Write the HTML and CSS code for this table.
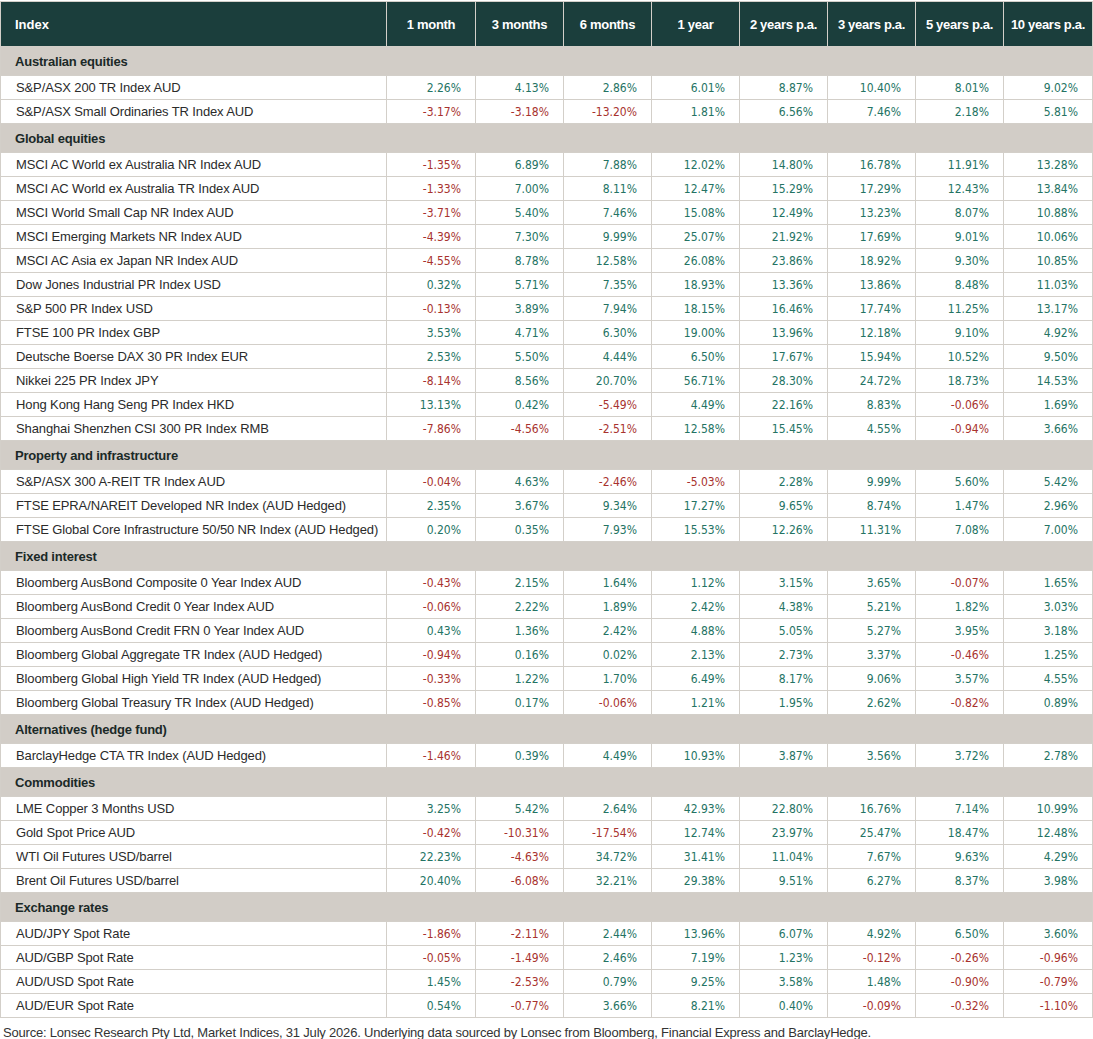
FILE: index.html
```html
<!DOCTYPE html>
<html lang="en">
<head>
<meta charset="utf-8">
<title>Market indices</title>
<link rel="stylesheet" href="styles.css">
</head>
<body>
<div class="page">
<table class="perf">
  <colgroup>
    <col class="c-name"><col class="c-n1"><col class="c-n"><col class="c-n"><col class="c-n"><col class="c-n"><col class="c-n"><col class="c-n"><col class="c-n1">
  </colgroup>
  <thead>
    <tr class="head">
      <th class="name">Index</th><th>1 month</th><th>3 months</th><th>6 months</th><th>1 year</th><th>2 years p.a.</th><th>3 years p.a.</th><th>5 years p.a.</th><th>10 years p.a.</th>
    </tr>
  </thead>
  <tbody>
    <tr class="sec"><td colspan="9">Australian equities</td></tr>
    <tr><td class="name">S&amp;P/ASX 200 TR Index AUD</td><td class="p">2.26%</td><td class="p">4.13%</td><td class="p">2.86%</td><td class="p">6.01%</td><td class="p">8.87%</td><td class="p">10.40%</td><td class="p">8.01%</td><td class="p">9.02%</td></tr>
    <tr><td class="name">S&amp;P/ASX Small Ordinaries TR Index AUD</td><td class="n">-3.17%</td><td class="n">-3.18%</td><td class="n">-13.20%</td><td class="p">1.81%</td><td class="p">6.56%</td><td class="p">7.46%</td><td class="p">2.18%</td><td class="p">5.81%</td></tr>
    <tr class="sec"><td colspan="9">Global equities</td></tr>
    <tr><td class="name">MSCI AC World ex Australia NR Index AUD</td><td class="n">-1.35%</td><td class="p">6.89%</td><td class="p">7.88%</td><td class="p">12.02%</td><td class="p">14.80%</td><td class="p">16.78%</td><td class="p">11.91%</td><td class="p">13.28%</td></tr>
    <tr><td class="name">MSCI AC World ex Australia TR Index AUD</td><td class="n">-1.33%</td><td class="p">7.00%</td><td class="p">8.11%</td><td class="p">12.47%</td><td class="p">15.29%</td><td class="p">17.29%</td><td class="p">12.43%</td><td class="p">13.84%</td></tr>
    <tr><td class="name">MSCI World Small Cap NR Index AUD</td><td class="n">-3.71%</td><td class="p">5.40%</td><td class="p">7.46%</td><td class="p">15.08%</td><td class="p">12.49%</td><td class="p">13.23%</td><td class="p">8.07%</td><td class="p">10.88%</td></tr>
    <tr><td class="name">MSCI Emerging Markets NR Index AUD</td><td class="n">-4.39%</td><td class="p">7.30%</td><td class="p">9.99%</td><td class="p">25.07%</td><td class="p">21.92%</td><td class="p">17.69%</td><td class="p">9.01%</td><td class="p">10.06%</td></tr>
    <tr><td class="name">MSCI AC Asia ex Japan NR Index AUD</td><td class="n">-4.55%</td><td class="p">8.78%</td><td class="p">12.58%</td><td class="p">26.08%</td><td class="p">23.86%</td><td class="p">18.92%</td><td class="p">9.30%</td><td class="p">10.85%</td></tr>
    <tr><td class="name">Dow Jones Industrial PR Index USD</td><td class="p">0.32%</td><td class="p">5.71%</td><td class="p">7.35%</td><td class="p">18.93%</td><td class="p">13.36%</td><td class="p">13.86%</td><td class="p">8.48%</td><td class="p">11.03%</td></tr>
    <tr><td class="name">S&amp;P 500 PR Index USD</td><td class="n">-0.13%</td><td class="p">3.89%</td><td class="p">7.94%</td><td class="p">18.15%</td><td class="p">16.46%</td><td class="p">17.74%</td><td class="p">11.25%</td><td class="p">13.17%</td></tr>
    <tr><td class="name">FTSE 100 PR Index GBP</td><td class="p">3.53%</td><td class="p">4.71%</td><td class="p">6.30%</td><td class="p">19.00%</td><td class="p">13.96%</td><td class="p">12.18%</td><td class="p">9.10%</td><td class="p">4.92%</td></tr>
    <tr><td class="name">Deutsche Boerse DAX 30 PR Index EUR</td><td class="p">2.53%</td><td class="p">5.50%</td><td class="p">4.44%</td><td class="p">6.50%</td><td class="p">17.67%</td><td class="p">15.94%</td><td class="p">10.52%</td><td class="p">9.50%</td></tr>
    <tr><td class="name">Nikkei 225 PR Index JPY</td><td class="n">-8.14%</td><td class="p">8.56%</td><td class="p">20.70%</td><td class="p">56.71%</td><td class="p">28.30%</td><td class="p">24.72%</td><td class="p">18.73%</td><td class="p">14.53%</td></tr>
    <tr><td class="name">Hong Kong Hang Seng PR Index HKD</td><td class="p">13.13%</td><td class="p">0.42%</td><td class="n">-5.49%</td><td class="p">4.49%</td><td class="p">22.16%</td><td class="p">8.83%</td><td class="n">-0.06%</td><td class="p">1.69%</td></tr>
    <tr><td class="name">Shanghai Shenzhen CSI 300 PR Index RMB</td><td class="n">-7.86%</td><td class="n">-4.56%</td><td class="n">-2.51%</td><td class="p">12.58%</td><td class="p">15.45%</td><td class="p">4.55%</td><td class="n">-0.94%</td><td class="p">3.66%</td></tr>
    <tr class="sec"><td colspan="9">Property and infrastructure</td></tr>
    <tr><td class="name">S&amp;P/ASX 300 A-REIT TR Index AUD</td><td class="n">-0.04%</td><td class="p">4.63%</td><td class="n">-2.46%</td><td class="n">-5.03%</td><td class="p">2.28%</td><td class="p">9.99%</td><td class="p">5.60%</td><td class="p">5.42%</td></tr>
    <tr><td class="name">FTSE EPRA/NAREIT Developed NR Index (AUD Hedged)</td><td class="p">2.35%</td><td class="p">3.67%</td><td class="p">9.34%</td><td class="p">17.27%</td><td class="p">9.65%</td><td class="p">8.74%</td><td class="p">1.47%</td><td class="p">2.96%</td></tr>
    <tr><td class="name">FTSE Global Core Infrastructure 50/50 NR Index (AUD Hedged)</td><td class="p">0.20%</td><td class="p">0.35%</td><td class="p">7.93%</td><td class="p">15.53%</td><td class="p">12.26%</td><td class="p">11.31%</td><td class="p">7.08%</td><td class="p">7.00%</td></tr>
    <tr class="sec"><td colspan="9">Fixed interest</td></tr>
    <tr><td class="name">Bloomberg AusBond Composite 0 Year Index AUD</td><td class="n">-0.43%</td><td class="p">2.15%</td><td class="p">1.64%</td><td class="p">1.12%</td><td class="p">3.15%</td><td class="p">3.65%</td><td class="n">-0.07%</td><td class="p">1.65%</td></tr>
    <tr><td class="name">Bloomberg AusBond Credit 0 Year Index AUD</td><td class="n">-0.06%</td><td class="p">2.22%</td><td class="p">1.89%</td><td class="p">2.42%</td><td class="p">4.38%</td><td class="p">5.21%</td><td class="p">1.82%</td><td class="p">3.03%</td></tr>
    <tr><td class="name">Bloomberg AusBond Credit FRN 0 Year Index AUD</td><td class="p">0.43%</td><td class="p">1.36%</td><td class="p">2.42%</td><td class="p">4.88%</td><td class="p">5.05%</td><td class="p">5.27%</td><td class="p">3.95%</td><td class="p">3.18%</td></tr>
    <tr><td class="name">Bloomberg Global Aggregate TR Index (AUD Hedged)</td><td class="n">-0.94%</td><td class="p">0.16%</td><td class="p">0.02%</td><td class="p">2.13%</td><td class="p">2.73%</td><td class="p">3.37%</td><td class="n">-0.46%</td><td class="p">1.25%</td></tr>
    <tr><td class="name">Bloomberg Global High Yield TR Index (AUD Hedged)</td><td class="n">-0.33%</td><td class="p">1.22%</td><td class="p">1.70%</td><td class="p">6.49%</td><td class="p">8.17%</td><td class="p">9.06%</td><td class="p">3.57%</td><td class="p">4.55%</td></tr>
    <tr><td class="name">Bloomberg Global Treasury TR Index (AUD Hedged)</td><td class="n">-0.85%</td><td class="p">0.17%</td><td class="n">-0.06%</td><td class="p">1.21%</td><td class="p">1.95%</td><td class="p">2.62%</td><td class="n">-0.82%</td><td class="p">0.89%</td></tr>
    <tr class="sec"><td colspan="9">Alternatives (hedge fund)</td></tr>
    <tr><td class="name">BarclayHedge CTA TR Index (AUD Hedged)</td><td class="n">-1.46%</td><td class="p">0.39%</td><td class="p">4.49%</td><td class="p">10.93%</td><td class="p">3.87%</td><td class="p">3.56%</td><td class="p">3.72%</td><td class="p">2.78%</td></tr>
    <tr class="sec"><td colspan="9">Commodities</td></tr>
    <tr><td class="name">LME Copper 3 Months USD</td><td class="p">3.25%</td><td class="p">5.42%</td><td class="p">2.64%</td><td class="p">42.93%</td><td class="p">22.80%</td><td class="p">16.76%</td><td class="p">7.14%</td><td class="p">10.99%</td></tr>
    <tr><td class="name">Gold Spot Price AUD</td><td class="n">-0.42%</td><td class="n">-10.31%</td><td class="n">-17.54%</td><td class="p">12.74%</td><td class="p">23.97%</td><td class="p">25.47%</td><td class="p">18.47%</td><td class="p">12.48%</td></tr>
    <tr><td class="name">WTI Oil Futures USD/barrel</td><td class="p">22.23%</td><td class="n">-4.63%</td><td class="p">34.72%</td><td class="p">31.41%</td><td class="p">11.04%</td><td class="p">7.67%</td><td class="p">9.63%</td><td class="p">4.29%</td></tr>
    <tr><td class="name">Brent Oil Futures USD/barrel</td><td class="p">20.40%</td><td class="n">-6.08%</td><td class="p">32.21%</td><td class="p">29.38%</td><td class="p">9.51%</td><td class="p">6.27%</td><td class="p">8.37%</td><td class="p">3.98%</td></tr>
    <tr class="sec"><td colspan="9">Exchange rates</td></tr>
    <tr><td class="name">AUD/JPY Spot Rate</td><td class="n">-1.86%</td><td class="n">-2.11%</td><td class="p">2.44%</td><td class="p">13.96%</td><td class="p">6.07%</td><td class="p">4.92%</td><td class="p">6.50%</td><td class="p">3.60%</td></tr>
    <tr><td class="name">AUD/GBP Spot Rate</td><td class="n">-0.05%</td><td class="n">-1.49%</td><td class="p">2.46%</td><td class="p">7.19%</td><td class="p">1.23%</td><td class="n">-0.12%</td><td class="n">-0.26%</td><td class="n">-0.96%</td></tr>
    <tr><td class="name">AUD/USD Spot Rate</td><td class="p">1.45%</td><td class="n">-2.53%</td><td class="p">0.79%</td><td class="p">9.25%</td><td class="p">3.58%</td><td class="p">1.48%</td><td class="n">-0.90%</td><td class="n">-0.79%</td></tr>
    <tr><td class="name">AUD/EUR Spot Rate</td><td class="p">0.54%</td><td class="n">-0.77%</td><td class="p">3.66%</td><td class="p">8.21%</td><td class="p">0.40%</td><td class="n">-0.09%</td><td class="n">-0.32%</td><td class="n">-1.10%</td></tr>
  </tbody>
</table>
<p class="source">Source: Lonsec Research Pty Ltd, Market Indices, 31 July 2026. Underlying data sourced by Lonsec from Bloomberg, Financial Express and BarclayHedge.</p>
</div>
</body>
</html>
```

FILE: styles.css
```css
html, body {
  margin: 0;
  padding: 0;
  background: #ffffff;
}

.page {
  padding: 1px 0 0 0;
}

.perf {
  width: 1092px;
  border-collapse: collapse;
  table-layout: fixed;
  font-family: "Liberation Sans", Arial, sans-serif;
  font-size: 13px;
  color: #2a2a2a;
}

.c-name { width: 386px; }
.c-n1 { width: 89px; }
.c-n { width: 88px; }

.perf th,
.perf td {
  border: 1px solid #d3cfc9;
  padding: 0;
  vertical-align: middle;
}

.head th {
  height: 44px;
  background: #1b3e3c;
  color: #ffffff;
  font-weight: bold;
  font-size: 13px;
  letter-spacing: -0.3px;
  text-align: center;
  border-color: #d3cfc9;
}

.head th.name {
  text-align: left;
  padding-left: 14px;
  letter-spacing: 0;
}

.sec td {
  height: 28px;
  background: #d2cdc7;
  color: #1b2927;
  font-weight: bold;
  font-size: 13px;
  letter-spacing: -0.2px;
  padding-left: 14px;
}

.perf tbody tr:not(.sec) td {
  height: 23px;
}

.perf td.name {
  padding-left: 15px;
  color: #2b2b2b;
  letter-spacing: -0.12px;
}

.perf td.p,
.perf td.n {
  font-family: "DejaVu Sans Condensed", "DejaVu Sans", sans-serif;
  font-size: 12px;
  text-align: right;
  padding-right: 14px;
}

.perf td.p { color: #247363; }
.perf td.n { color: #a8322e; }

.source {
  margin: 7px 0 0 3px;
  font-family: "Liberation Sans", Arial, sans-serif;
  font-size: 13px;
  color: #333333;
  letter-spacing: -0.2px;
}
```
